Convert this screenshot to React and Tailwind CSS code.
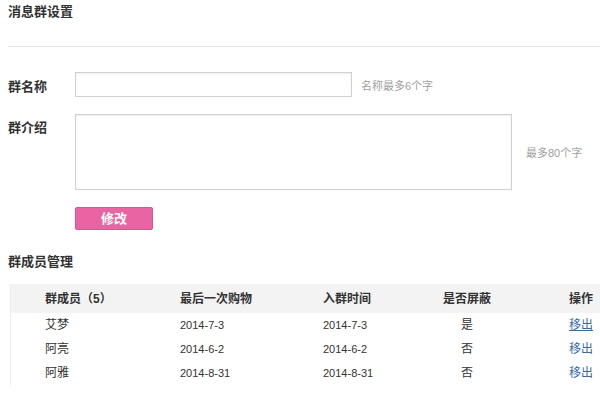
import { useState } from "react";

const members = [
  { name: "艾梦", last: "2014-7-3", joined: "2014-7-3", blocked: "是" },
  { name: "阿亮", last: "2014-6-2", joined: "2014-6-2", blocked: "否" },
  { name: "阿雅", last: "2014-8-31", joined: "2014-8-31", blocked: "否" },
];

export default function App() {
  const [groupName, setGroupName] = useState("");
  const [intro, setIntro] = useState("");

  return (
    <div
      className="w-[600px] h-[396px] overflow-hidden bg-white text-[#333] pl-[8px]"
      style={{ fontFamily: '"Liberation Sans", "Noto Sans CJK SC", sans-serif' }}
    >
      {/* title */}
      <h1 className="mt-[2px] text-[13px] leading-[20px] font-bold">消息群设置</h1>
      <div className="mt-[24px] h-px bg-[#e6e6e6]"></div>

      {/* group name */}
      <div className="mt-[25px] flex items-center">
        <label className="w-[67px] pt-[4px] text-[13px] font-bold">群名称</label>
        <input
          value={groupName}
          onChange={(e) => setGroupName(e.target.value)}
          className="w-[277px] h-[25px] border border-[#d0d0d0] shadow-[inset_0_1px_2px_rgba(0,0,0,0.08)] outline-none px-2 text-[12px]"
        />
        <span className="ml-[9px] pt-[3px] text-[11px] text-[#a0a0a0]">名称最多6个字</span>
      </div>

      {/* group intro */}
      <div className="mt-[17px] flex">
        <label className="w-[67px] pt-[5px] text-[13px] leading-[18px] font-bold">群介绍</label>
        <textarea
          value={intro}
          onChange={(e) => setIntro(e.target.value)}
          className="w-[437px] h-[76px] resize-none border border-[#d0d0d0] shadow-[inset_0_1px_2px_rgba(0,0,0,0.08)] outline-none px-2 py-1 text-[12px]"
        />
        <span className="ml-[14px] self-center pt-[2px] text-[11px] text-[#a0a0a0]">最多80个字</span>
      </div>

      {/* submit */}
      <div className="mt-[16px] pl-[67px]">
        <button className="w-[78px] h-[23px] rounded-[2px] bg-[#e964a3] border border-[#d7548f] text-white text-[13px] font-bold leading-none">
          修改
        </button>
      </div>

      {/* members */}
      <h2 className="mt-[22px] text-[13px] leading-[20px] font-bold">群成员管理</h2>

      <div className="mt-[12px] ml-[2px] border-l border-[#ececec]">
        <table className="w-[590px] table-fixed border-collapse text-[12px]">
          <colgroup>
            <col className="w-[135px]" />
            <col className="w-[145px]" />
            <col className="w-[110px]" />
            <col className="w-[132px]" />
            <col className="w-[68px]" />
          </colgroup>
          <thead>
            <tr className="h-[29px] bg-[#f3f3f3] text-[12px] font-bold">
              <th className="pl-[34px] text-left font-bold">群成员（5）</th>
              <th className="pl-[34px] text-left font-bold">最后一次购物</th>
              <th className="pl-[32px] text-left font-bold">入群时间</th>
              <th className="text-center font-bold">是否屏蔽</th>
              <th className="pl-[36px] text-left font-bold">操作</th>
            </tr>
          </thead>
          <tbody>
            {members.map((m, i) => (
              <tr key={m.name} className="h-[24px]">
                <td className="pl-[34px]">{m.name}</td>
                <td className="pl-[34px] text-[11px]">{m.last}</td>
                <td className="pl-[32px] text-[11px]">{m.joined}</td>
                <td className="text-center">{m.blocked}</td>
                <td className="pl-[36px]">
                  <a href="#" className={`text-[#3a6aa0] ${i === 0 ? "underline" : ""}`}>
                    移出
                  </a>
                </td>
              </tr>
            ))}
          </tbody>
        </table>
      </div>
    </div>
  );
}
